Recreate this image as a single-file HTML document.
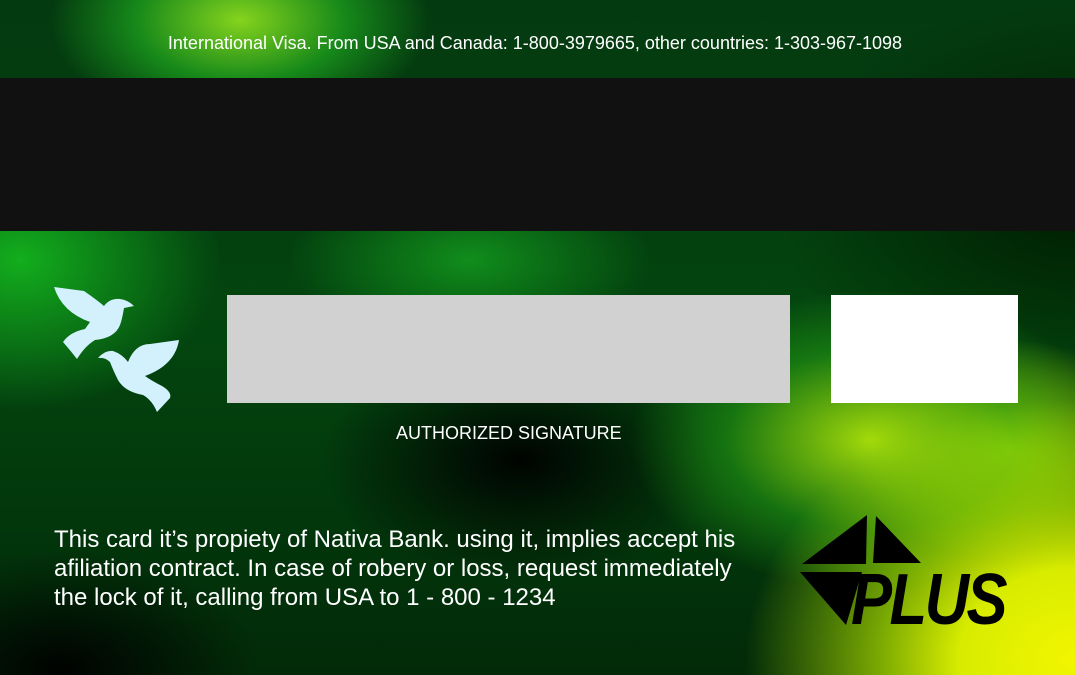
<!DOCTYPE html>
<html><head><meta charset="utf-8"><style>
html,body{margin:0;padding:0}
body{width:1075px;height:675px;position:relative;overflow:hidden;font-family:"Liberation Sans",sans-serif;
background:
radial-gradient(ellipse 190px 110px at 240px 20px, rgba(140,220,30,0.95), rgba(30,170,30,0.7) 55%, rgba(0,0,0,0) 100%),
radial-gradient(ellipse 330px 260px at 1075px 660px, #f2f600, #d8ec00 35%, rgba(170,220,0,0.7) 60%, rgba(0,0,0,0) 100%),
radial-gradient(ellipse 240px 150px at 870px 440px, rgba(170,225,10,0.95), rgba(40,170,20,0.5) 60%, rgba(0,0,0,0) 100%),
radial-gradient(ellipse 160px 110px at 1010px 450px, rgba(190,230,0,0.9), rgba(0,0,0,0) 100%),
radial-gradient(ellipse 200px 120px at 520px 460px, rgba(0,0,0,0.95), rgba(0,0,0,0) 100%),
radial-gradient(ellipse 200px 120px at 60px 670px, rgba(0,0,0,0.95), rgba(0,0,0,0) 100%),
radial-gradient(ellipse 180px 90px at 470px 260px, rgba(20,160,30,0.8), rgba(0,0,0,0) 100%),
radial-gradient(ellipse 200px 150px at 20px 260px, rgba(20,180,30,0.95), rgba(0,0,0,0) 100%),
radial-gradient(ellipse 300px 200px at 1075px 200px, rgba(0,30,0,1), rgba(0,0,0,0) 100%),
linear-gradient(180deg,#043a10,#03450f 50%,#022a08);}
.top{position:absolute;left:0;top:33px;width:1070px;text-align:center;color:#fff;font-size:18px}
.stripe{position:absolute;left:0;top:78px;width:1075px;height:153px;background:#111}
.sig{position:absolute;left:227px;top:295px;width:563px;height:108px;background:#d1d1d1}
.cvv{position:absolute;left:831px;top:295px;width:187px;height:108px;background:#fff}
.auth{position:absolute;left:396px;top:423px;color:#fff;font-size:18px;white-space:nowrap}
.txt{position:absolute;left:54px;top:525px;color:#fff;font-size:24px;line-height:29px;white-space:nowrap}
</style></head><body>
<div class="top">International Visa. From USA and Canada: 1-800-3979665, other countries: 1-303-967-1098</div>
<div class="stripe"></div>
<svg style="position:absolute;left:0;top:0" width="1075" height="675">
<path fill="#d2f1fc" d="M54,287 L84,291 Q97,300 104,306 Q110,298 120,299 Q128,300 134,306 L124,308 Q122,320 120,325 Q115,338 95,340 Q85,346 77,359 Q70,350 63,342 Q70,332 85,329 L90,322 Q62,312 54,287 Z"/>
<path fill="#d2f1fc" d="M179,340 Q175,365 145,376 Q152,381 162,386 Q172,392 170,398 L157,412 Q152,400 143,395 Q125,392 118,380 Q113,370 110,362 Q105,357 98,358 Q105,350 113,351 Q122,354 128,362 Q135,344 150,344 Z"/>
<polygon fill="#000" points="867,515 802,564 866,564"/>
<polygon fill="#000" points="876,516 921,563 873,563"/>
<polygon fill="#000" points="800,572 862,572 846,625"/>
<text x="851" y="624" font-family="Liberation Sans" font-weight="bold" font-style="italic" font-size="72" fill="#000" textLength="154" lengthAdjust="spacingAndGlyphs" letter-spacing="-3">PLUS</text>
</svg>
<div class="sig"></div>
<div class="cvv"></div>
<div class="auth">AUTHORIZED SIGNATURE</div>
<div class="txt">This card it’s propiety of Nativa Bank. using it, implies accept his<br>afiliation contract. In case of robery or loss, request immediately<br>the lock of it, calling from USA to 1 - 800 - 1234</div>
</body></html>
